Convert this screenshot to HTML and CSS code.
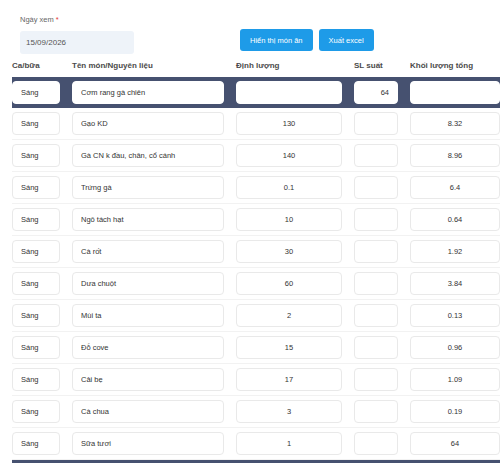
FILE: index.html
```html
<!DOCTYPE html>
<html lang="vi">
<head>
    <meta charset="UTF-8">
    <meta name="viewport" content="width=device-width, initial-scale=1.0">
    <title>Tổng hợp nguyên liệu</title>
    <link rel="stylesheet" href="styles.css">
</head>
<body>
    <div class="page">
        <div class="filters">
            <div class="field">
                <label class="field-label" for="ngayXem">Ngày xem <span class="required">*</span></label>
                <input class="date-input" id="ngayXem" type="text" value="15/09/2026">
            </div>
            <div class="actions">
                <button class="btn-primary">Hiển thị món ăn</button>
                <button class="btn-primary">Xuất excel</button>
            </div>
        </div>

        <div class="grid-row grid-head">
            <div>Ca/bữa</div>
            <div>Tên món/Nguyên liệu</div>
            <div>Định lượng</div>
            <div>SL suất</div>
            <div>Khối lượng tổng</div>
        </div>

        <div id="rows"></div>
    </div>

    <script>
        // Món ăn và nguyên liệu trong ngày
        const dishes = [
            {
                ca: 'Sáng', ten: 'Cơm rang gà chiên', suat: '64',
                items: [
                    ['Gạo KD', '130', '8.32'],
                    ['Gà CN k đầu, chân, cổ cánh', '140', '8.96'],
                    ['Trứng gà', '0.1', '6.4'],
                    ['Ngô tách hạt', '10', '0.64'],
                    ['Cà rốt', '30', '1.92'],
                    ['Dưa chuột', '60', '3.84'],
                    ['Mùi ta', '2', '0.13'],
                    ['Đỗ cove', '15', '0.96'],
                    ['Cải bẹ', '17', '1.09'],
                    ['Cà chua', '3', '0.19'],
                    ['Sữa tươi', '1', '64']
                ]
            },
            { ca: 'Sáng', ten: '', suat: '', items: [] }
        ];

        function cell(cls, value) {
            return `<div><input class="cell ${cls}" type="text" value="${value}"></div>`;
        }

        const rows = document.getElementById('rows');
        let html = '';
        dishes.forEach(d => {
            html += `<div class="grid-row dish-row">
                ${cell('', d.ca)}${cell('', d.ten)}${cell('num', '')}${cell('right', d.suat)}${cell('num', '')}
            </div>`;
            d.items.forEach(it => {
                html += `<div class="grid-row item-row">
                    ${cell('', d.ca)}${cell('', it[0])}${cell('num', it[1])}${cell('num', '')}${cell('num', it[2])}
                </div>`;
            });
        });
        rows.innerHTML = html;
    </script>
</body>
</html>
```

FILE: styles.css
```css
* {
    margin: 0;
    padding: 0;
    box-sizing: border-box;
}

html, body {
    height: 100%;
}

body {
    font-family: "Liberation Sans", Arial, sans-serif;
    background: #fff;
    color: #333;
    overflow: hidden;
}

.page {
    padding: 15px 0 0 12px;
}

/* Filter bar */
.filters {
    display: flex;
    align-items: flex-end;
    padding-left: 8px;
    margin-bottom: 7px;
}

.field {
    display: flex;
    flex-direction: column;
}

.field-label {
    font-size: 7.5px;
    line-height: 10px;
    color: #666;
    margin-bottom: 6px;
}

.required {
    color: #e53935;
}

.date-input {
    width: 114px;
    height: 23px;
    border: none;
    border-radius: 3px;
    background: #eef3f9;
    padding: 0 6px;
    font-family: inherit;
    font-size: 8px;
    color: #555;
    outline: none;
}

.actions {
    display: flex;
    gap: 6px;
    margin-left: 106px;
    margin-bottom: 3px;
}

.btn-primary {
    height: 22px;
    padding: 0 10px;
    border: none;
    border-radius: 3px;
    background: #1e9be8;
    color: #fff;
    font-family: inherit;
    font-size: 7.5px;
    cursor: pointer;
}

.btn-primary:hover {
    background: #1688d0;
}

/* Table grid */
.grid-row {
    display: grid;
    grid-template-columns: 48px 152px 106px 44px 90px;
    column-gap: 12px;
}

.grid-head {
    font-size: 8px;
    font-weight: 700;
    color: #4a4a4a;
    line-height: 10px;
    padding-bottom: 6px;
}

.dish-row {
    background: #465170;
    padding: 4px 0;
}

.item-row {
    padding: 4px 0;
    border-bottom: 1px solid #f2f2f2;
}

.cell {
    width: 100%;
    height: 23px;
    border: 1px solid #e9e9e9;
    border-radius: 4px;
    background: #fff;
    padding: 0 8px;
    font-family: inherit;
    font-size: 7.5px;
    color: #333;
    outline: none;
}

.dish-row .cell {
    border-color: #fff;
}

.cell.num {
    text-align: center;
}

.cell.right {
    text-align: right;
}
```
